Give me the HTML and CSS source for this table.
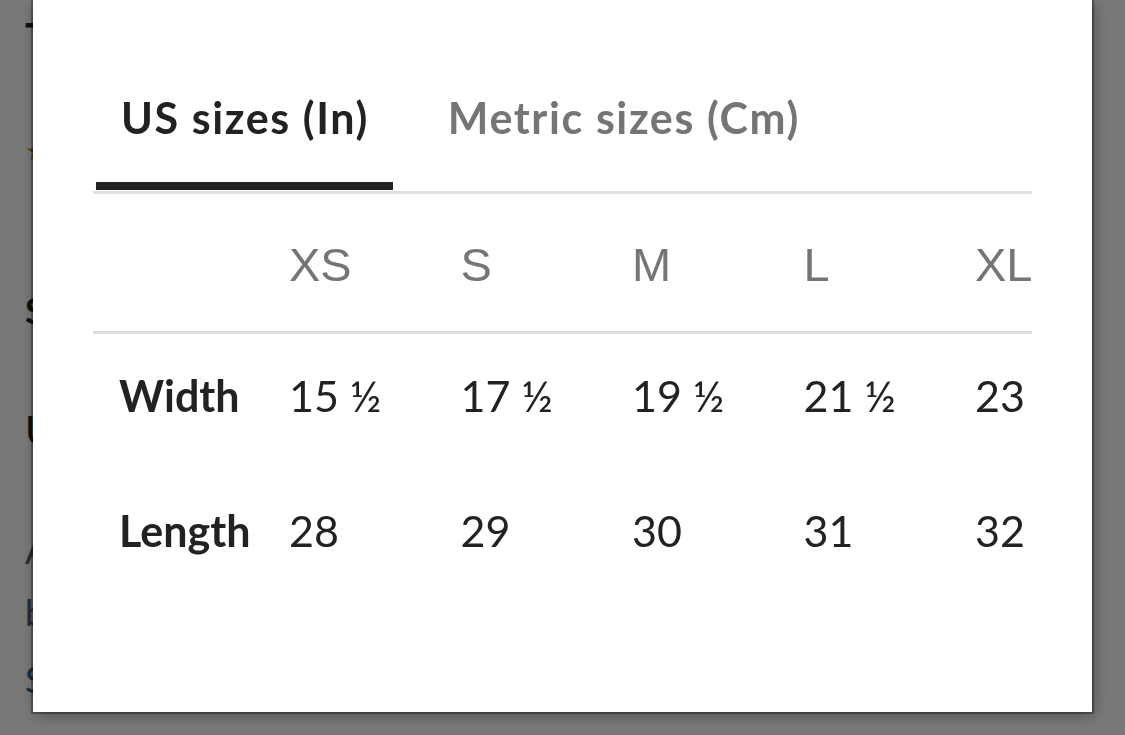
FILE: index.html
```html
<!DOCTYPE html>
<html lang="en">
<head>
<meta charset="utf-8">
<title>Size chart</title>
<link rel="stylesheet" href="styles.css">
</head>
<body>
<div class="page">
  <h1 class="page-title">T</h1>
  <div class="page-stars">★</div>
  <h2 class="page-sub">S</h2>
  <p class="page-lead">U</p>
  <p class="page-text">A</p>
  <p class="page-text">b</p>
  <a class="page-link" href="#">S</a>
</div>
<div class="overlay"></div>
<div class="modal">
  <div class="tabs">
    <div class="tab tab-active">US sizes (In)</div>
    <div class="tab">Metric sizes (Cm)</div>
  </div>
  <div class="chart">
    <div class="row row-head">
      <div class="cell cell-label"></div>
      <div class="cell">XS</div>
      <div class="cell">S</div>
      <div class="cell">M</div>
      <div class="cell">L</div>
      <div class="cell">XL</div>
    </div>
    <div class="row row-body">
      <div class="cell cell-label">Width</div>
      <div class="cell">15 ½</div>
      <div class="cell">17 ½</div>
      <div class="cell">19 ½</div>
      <div class="cell">21 ½</div>
      <div class="cell">23</div>
    </div>
    <div class="row row-body">
      <div class="cell cell-label">Length</div>
      <div class="cell">28</div>
      <div class="cell">29</div>
      <div class="cell">30</div>
      <div class="cell">31</div>
      <div class="cell">32</div>
    </div>
  </div>
</div>
</body>
</html>
```
FILE: styles.css
```css
html, body {
  margin: 0;
  padding: 0;
  width: 1125px;
  height: 735px;
  overflow: hidden;
  background: #ffffff;
  font-family: Lato, "Liberation Sans", sans-serif;
}

/* page behind the dialog (only its left edge shows) */
.page {
  display: flex;
  flex-direction: column;
  align-items: flex-start;
  padding-left: 25px;
  color: #222222;
}
.page-title {
  margin: 0;
  height: 120px;
  padding-top: 17px;
  box-sizing: border-box;
  font-size: 40px;
  line-height: 40px;
  font-weight: 700;
}
.page-stars {
  height: 160px;
  font-size: 26px;
  line-height: 60px;
  color: #b98650;
}
.page-sub {
  margin: 0;
  height: 120px;
  font-size: 36px;
  line-height: 60px;
  font-weight: 700;
}
.page-lead {
  margin: 0;
  height: 120px;
  font-size: 40px;
  line-height: 60px;
}
.page-text {
  margin: 0;
  height: 62px;
  font-size: 36px;
  line-height: 60px;
  color: #595959;
}
.page-link {
  margin-top: 5px;
  font-size: 36px;
  line-height: 60px;
  color: #2f5d8a;
  text-decoration: none;
}

.overlay {
  position: fixed;
  inset: 0;
  background: rgba(0, 0, 0, 0.53);
}

/* dialog */
.modal {
  position: fixed;
  left: 33px;
  top: 0;
  width: 1059px;
  height: 712px;
  box-sizing: border-box;
  padding: 0 60px;
  background: #ffffff;
  box-shadow: 0 0 0 2px rgba(0, 0, 0, 0.3), 2px 3px 14px rgba(0, 0, 0, 0.35);
}

.tabs {
  display: flex;
  gap: 30px;
  border-bottom: 3px solid #e2e2e2;
  padding-left: 3px;
}
.tab {
  padding: 92px 24px 38px 25px;
  margin-bottom: 1px;
  border-bottom: 8px solid transparent;
  font-size: 43px;
  line-height: 52px;
  font-weight: 700;
  letter-spacing: 1.6px;
  color: #757575;
  white-space: nowrap;
}
.tab-active {
  color: #222222;
  border-bottom-color: #222222;
}

.row {
  display: grid;
  grid-template-columns: 196px 171.5px 171.5px 171.5px 171.5px 57px;
  box-sizing: border-box;
}
.row-head {
  height: 140px;
  padding-top: 44px;
  border-bottom: 3px solid #dddddd;
  font-family: "Liberation Sans", Arial, sans-serif;
  font-size: 47px;
  line-height: 54px;
  color: #757575;
}
.row-body {
  height: 135px;
  padding-top: 36px;
  font-size: 43px;
  line-height: 52px;
  color: #222222;
}
.cell {
  white-space: nowrap;
}
.cell-label {
  padding-left: 26px;
  font-weight: 700;
}
```
